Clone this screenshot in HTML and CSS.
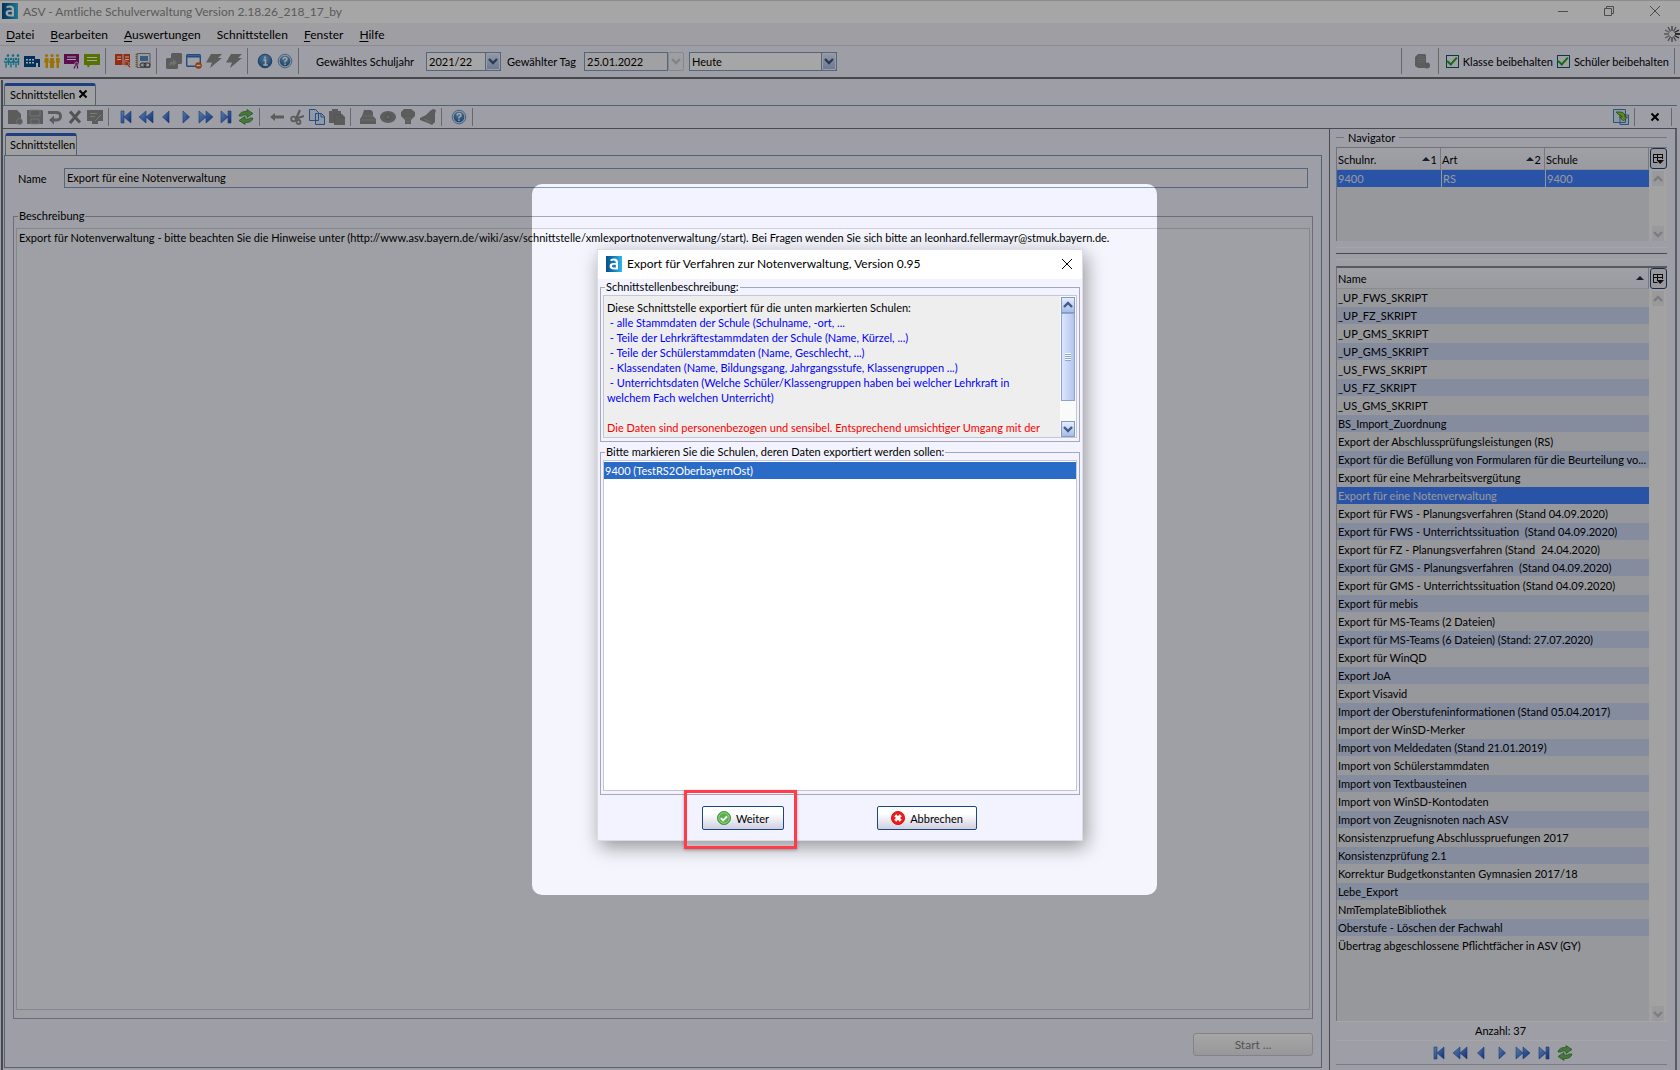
FILE: index.html
```html
<!DOCTYPE html>
<html lang="de">
<head>
<meta charset="utf-8">
<title>ASV - Amtliche Schulverwaltung</title>
<link rel="stylesheet" href="styles.css">
</head>
<body>
<svg class="defs" aria-hidden="true">
  <defs>
    <linearGradient id="blue" x1="0" y1="0" x2="1" y2="1"><stop offset="0" stop-color="#8fc4ff"/><stop offset="1" stop-color="#1848b8"/></linearGradient>
    <linearGradient id="logo" x1="0" y1="0" x2="1" y2="0"><stop offset="0" stop-color="#06508c"/><stop offset=".45" stop-color="#1478b4"/><stop offset="1" stop-color="#30b8e8"/></linearGradient>
    <radialGradient id="ball" cx=".5" cy=".3" r=".8"><stop offset="0" stop-color="#7db4e8"/><stop offset="1" stop-color="#1f5c9c"/></radialGradient>
  </defs>
  <symbol id="i-logo" viewBox="0 0 16 16"><path d="M0 0h16v16H0z" fill="url(#logo)"/><path d="M4.500 5V3.200Q6 2.400 8 2.400Q12 2.400 12 6V13.400H8Q3.600 13.400 3.600 10Q3.600 7 7.600 7H9.800V6Q9.800 4.400 7.800 4.400Q6 4.400 4.500 5Z" fill="#fff"/><path d="M9.800 8.800H8Q6 8.800 6 10.200T8 11.600H9.800Z" fill="#1478b4"/></symbol>
  <symbol id="i-group" viewBox="0 0 16 16"><g fill="#1ba8c8"><circle cx="4" cy="2.600" r="1.300"/><circle cx="9" cy="2.600" r="1.300"/><circle cx="14" cy="2.600" r="1.300"/><circle cx="2" cy="6" r="1.300"/><circle cx="7" cy="6" r="1.300"/><circle cx="12" cy="6" r="1.300"/></g><path d="M0 8l2 2 2-2M5 8l2 2 2-2M10 8l2 2 2-2M2 9v5.500M7 9v5.500M12 9v5.500M4.500 5v7M9.500 5v7M14.500 5v7" fill="none" stroke="#1ba8c8" stroke-width="1.400"/></symbol>
  <symbol id="i-school" viewBox="0 0 16 16"><path d="M0 3h11v3h5v8H0z" fill="#004a8c"/><path d="M2 6h2v1.500H2zM5 6h2v1.500H5zM8 6h2v1.500H8zM2 9h2v1.500H2zM5 9h2v1.500H5zM8 9h2v1.500H8zM12 10h2v4h-2z" fill="#fff"/></symbol>
  <symbol id="i-people" viewBox="0 0 16 16"><g fill="#f0b000"><circle cx="2.500" cy="2.600" r="1.600"/><circle cx="8" cy="2.600" r="1.600"/><circle cx="13.500" cy="2.600" r="1.600"/><path d="M1 5h3.500v4.500H4V15H1.500V9.500H0zM6.500 5h3L11 10h-1v5H6v-5H5zM12 5h3.500l.5 4.500h-1V15h-2.500V9.500H12z"/></g></symbol>
  <symbol id="i-board" viewBox="0 0 16 16"><path d="M0 1h15v10H0z" fill="#8c1478"/><path d="M3 4h9M3 6.500h9" stroke="#fff"/><circle cx="12.500" cy="11" r="2" fill="#a83c98" stroke="#f3f3ff" stroke-width=".6"/><path d="M11.500 12.500l-1.500 3M13.500 12.500v3" stroke="#8c1478" stroke-width="1.200"/></symbol>
  <symbol id="i-chat" viewBox="0 0 16 16"><path d="M0 1h16v11H6l-2 3-1-3H0z" fill="#84b000"/><path d="M3 4.500h10M3 7.500h10" stroke="#fff"/></symbol>
  <symbol id="i-book" viewBox="0 0 16 16"><path d="M0 1h7.500v11H0zM8.500 1H15v11H8.500z" fill="#e8431c"/><path d="M2 4h4M2 6.500h4M10 4h4M10 6.500h4" stroke="#fff"/><path d="M9.500 7.500l1 6 1.500-1.500 2.500 3 1.200-1.200-2.500-2.800 1.500-1z" fill="#e8431c" stroke="#f3f3ff" stroke-width=".6"/></symbol>
  <symbol id="i-report" viewBox="0 0 16 16"><path d="M2 .5h13v14H2z" fill="#e8edf5" stroke="#888"/><path d="M5 3h8v5H5z" fill="#5c8cc8"/><path d="M1.500 1v13" stroke="#a88848" stroke-width="2" stroke-dasharray="1 1"/><rect x="5" y="10" width="6" height="4" rx="2" fill="#ddd" stroke="#444"/><rect x="9" y="10" width="6" height="4" rx="2" fill="none" stroke="#444"/></symbol>
  <symbol id="i-copyg" viewBox="0 0 16 16"><path d="M6 0h9l1 1v9l-1 1h-3v4l-1 1H1l-1-1V6l1-1h4V1z" fill="#8e8e90"/><path d="M3 13l1-4h3V6l4 3.500L7 13v-2z" fill="#b0b0b2"/></symbol>
  <symbol id="i-window" viewBox="0 0 16 16"><rect x=".7" y="1.700" width="13.600" height="11.600" rx="1" fill="#f4f6fa" stroke="#3872c8" stroke-width="1.400"/><path d="M1 3.500h13" stroke="#3872c8" stroke-width="2"/><circle cx="12.500" cy="12.500" r="3.300" fill="#e06010"/><path d="M10.500 12.500h4" stroke="#fff" stroke-width="1.400"/></symbol>
  <symbol id="i-bolt" viewBox="0 0 16 16"><path d="M5 1h11l-4 4h4L4 15l2-5.500H0z" fill="#8e8e90"/></symbol>
  <symbol id="i-info" viewBox="0 0 16 16"><circle cx="8" cy="8" r="6.800" fill="url(#ball)" stroke="#28649c"/><path d="M6.500 7H8.500v5M6.300 12h4.400M8 3.500v2" stroke="#fff" stroke-width="1.600" fill="none"/></symbol>
  <symbol id="i-help" viewBox="0 0 16 16"><circle cx="8" cy="8" r="6.800" fill="#d8e8f8" stroke="#6c9ccc"/><circle cx="8" cy="8" r="5.300" fill="url(#ball)"/><path d="M6 6.500Q6 4.500 8 4.500T10 6.300Q10 7.400 8 8.200V9.500M8 10.500v1.500" stroke="#fff" stroke-width="1.400" fill="none"/></symbol>
  <symbol id="i-db" viewBox="0 0 16 16"><path d="M4 1h7l1 1v8.500a3 3 0 0 0-1 4.500H4l-3-2V4z" fill="#8e8e90"/><circle cx="13" cy="12.500" r="3" fill="#8a8a8c"/><path d="M4 4h7M4 6.500h7M4 9h7" stroke="#a8a8aa" stroke-width=".7"/></symbol>
  <symbol id="i-new" viewBox="0 0 16 16"><path d="M1 1h9l4 4v8h-1v2H1z" fill="#8e8e90"/><circle cx="12.500" cy="12.500" r="3" fill="#8e8e90" stroke="#b8b8bc" stroke-width=".8"/></symbol>
  <symbol id="i-save" viewBox="0 0 16 16"><path d="M0 1h15l1 1v13H0z" fill="#8e8e90"/><path d="M3 1h10v6H3zM4 10h8v5H4z" fill="#8e8e90" stroke="#bcbcc0" stroke-width=".8"/></symbol>
  <symbol id="i-undo" viewBox="0 0 16 16"><path d="M1 3.500h8q4.500 0 4.500 3.800t-4.500 3.700H6" fill="none" stroke="#8e8e90" stroke-width="3"/><path d="M7 6.500v9L2 11z" fill="#8e8e90"/></symbol>
  <symbol id="i-del" viewBox="0 0 16 16"><path d="M3 2.500l10 11M13 2L3 14" stroke="#808082" stroke-width="3"/></symbol>
  <symbol id="i-edit" viewBox="0 0 16 16"><path d="M0 1h16v11h-5v3H5v-3H0z" fill="#8e8e90"/><path d="M3 4.500h7M3 7.500h5M8 12l6-6" stroke="#bcbcc0"/></symbol>
  <symbol id="i-first" viewBox="0 0 16 16"><path d="M3 2h3v12H3zM13 2v12L6 8z" fill="url(#blue)" stroke="#2458b8" stroke-width=".6"/></symbol>
  <symbol id="i-rew" viewBox="0 0 16 16"><path d="M8 2v12L1 8zM15 2v12L8 8z" fill="url(#blue)" stroke="#2458b8" stroke-width=".6"/></symbol>
  <symbol id="i-prev" viewBox="0 0 16 16"><path d="M11 2v12L4.500 8z" fill="url(#blue)" stroke="#2458b8" stroke-width=".6"/></symbol>
  <symbol id="i-next" viewBox="0 0 16 16"><path d="M5 2v12l6.500-6z" fill="url(#blue)" stroke="#2458b8" stroke-width=".6"/></symbol>
  <symbol id="i-fwd" viewBox="0 0 16 16"><path d="M1 2v12l7-6zM8 2v12l7-6z" fill="url(#blue)" stroke="#2458b8" stroke-width=".6"/></symbol>
  <symbol id="i-last" viewBox="0 0 16 16"><path d="M10 2h3v12h-3zM3 2v12l7-6z" fill="url(#blue)" stroke="#2458b8" stroke-width=".6"/></symbol>
  <symbol id="i-refresh" viewBox="0 0 16 16"><path d="M1 7q1-5 8-4.500V.5l6 4-6 4V6Q5 5.500 4 7zM15 9q-1 5-8 4.500v2l-6-4 6-4V10q4 .5 5-1z" fill="#6cb858" stroke="#2f8030" stroke-width=".7"/></symbol>
  <symbol id="i-back" viewBox="0 0 16 16"><path d="M1 8l5-4v2.500h9v3H6V12z" fill="#8e8e90"/></symbol>
  <symbol id="i-cut" viewBox="0 0 16 16"><path d="M11 1L7 10M15 7l-9 3" stroke="#8e8e90" stroke-width="2.200"/><circle cx="4.500" cy="10" r="2.300" fill="none" stroke="#8e8e90" stroke-width="1.800"/><circle cx="9.500" cy="13" r="2" fill="none" stroke="#8e8e90" stroke-width="1.800"/></symbol>
  <symbol id="i-copy" viewBox="0 0 16 16"><path d="M.5 .5h6l3 3v8h-9zM6.500 4.500h6l3 3v8h-9z" fill="#dcebff" stroke="#3c78c8"/><path d="M12 4.500V8h3.500" fill="none" stroke="#3c78c8"/></symbol>
  <symbol id="i-paste" viewBox="0 0 16 16"><path d="M0 2h3V0h6v2h3v3h1l3 3v8H5v-2H0z" fill="#8e8e90"/><path d="M5.500 14V5.500H12M12 5.500V9h4" fill="none" stroke="#7c7c7e" stroke-width=".7"/></symbol>
  <symbol id="i-print" viewBox="0 0 16 16"><path d="M4 1h7l2 2v4l3 3v5H0v-5l2-3z" fill="#8e8e90"/><path d="M3 7h10M1 11h14" stroke="#aaaaac" stroke-width=".8"/></symbol>
  <symbol id="i-eye" viewBox="0 0 16 16"><ellipse cx="8" cy="8" rx="8" ry="6" fill="#8e8e90"/><circle cx="8" cy="8" r="2.500" fill="#9c9c9e" stroke="#7a7a7c"/></symbol>
  <symbol id="i-bulb" viewBox="0 0 16 16"><path d="M4 0h7l4 3v4l-4 4v4H5v-4L1 7V3z" fill="#8e8e90"/><path d="M5 9.500h6M5 12.500h6" stroke="#a6a6a8" stroke-width=".8"/></symbol>
  <symbol id="i-bell" viewBox="0 0 16 16"><path d="M13 0l3 1-1 4v8l-3 3-4-2-8-3V9l6-3 4-4z" fill="#8e8e90"/><path d="M4 10l7 3" stroke="#a6a6a8"/></symbol>
  <symbol id="i-export" viewBox="0 0 16 16"><path d="M.5 .5h12v13H.5zM7 6h8.500v9.500H7z" fill="#dcebff" stroke="#4080b8"/><path d="M3 3h4q5 0 5 5h2.500l-4 4-4-4H9q0-2-3-2z" fill="#98d018" stroke="#2c7838" stroke-width=".8"/></symbol>
  <symbol id="i-x" viewBox="0 0 16 16"><path d="M4.500 4.500l7 7M11.500 4.500l-7 7" stroke="currentColor" stroke-width="2"/></symbol>
  <symbol id="i-close" viewBox="0 0 16 16"><path d="M3 3l10 10M13 3L3 13" stroke="currentColor"/></symbol>
  <symbol id="i-min" viewBox="0 0 16 16"><path d="M3 8.500h10" stroke="currentColor"/></symbol>
  <symbol id="i-max" viewBox="0 0 16 16"><path d="M3.500 5.500h7v7h-7zM5.500 5V3.500h7v7H11" fill="none" stroke="currentColor"/></symbol>
  <symbol id="i-down" viewBox="0 0 10 8"><path d="M1 2l4 4 4-4" fill="none" stroke="currentColor" stroke-width="2.400"/></symbol>
  <symbol id="i-up" viewBox="0 0 10 8"><path d="M1 6l4-4 4 4" fill="none" stroke="currentColor" stroke-width="2.400"/></symbol>
  <symbol id="i-cols" viewBox="0 0 12 12"><path d="M1 1.500h10M1 4.500h10M1.500 1v8.500h4M5.500 1v7M10.500 1v5" fill="none" stroke="#111"/><path d="M4.500 7H12L8.200 11z" fill="#111"/></symbol>
  <symbol id="i-sort" viewBox="0 0 8 4"><path d="M0 4l4-4 4 4z" fill="#1c3048"/></symbol>
  <symbol id="i-ok" viewBox="0 0 16 16"><circle cx="8" cy="8" r="7.500" fill="#58b04c" stroke="#3c9038"/><circle cx="8" cy="8" r="6" fill="none" stroke="#a8dca0" stroke-width=".8"/><path d="M4.500 8.200l2.500 2.500 4.500-4.700" fill="none" stroke="#fff" stroke-width="2.200"/></symbol>
  <symbol id="i-no" viewBox="0 0 16 16"><circle cx="8" cy="8" r="7.500" fill="#f41818" stroke="#d80c0c"/><path d="M4.800 4.800l6.400 6.400M11.200 4.800l-6.400 6.400" stroke="#fff" stroke-width="3.200"/></symbol>
  <symbol id="i-spin" viewBox="0 0 16 16"><g stroke-width="1.400"><path d="M11 8h5" stroke="#000"/><path d="M10.500 6.500L15 4M10.500 9.500L15 12" stroke="#333"/><path d="M9.500 5.500L12 1M9.500 10.500L12 15" stroke="#777"/><path d="M8 5V0M8 11v5" stroke="#666"/><path d="M6.500 5.500L4 1M6.500 10.500L4 15" stroke="#777"/><path d="M5.500 6.500L1 4M5.500 9.500L1 12M5 8H0" stroke="#888"/></g></symbol>
</svg>

<div class="app">
  <header class="titlebar">
    <svg class="logo"><use href="#i-logo"/></svg>
    <h1>ASV - Amtliche Schulverwaltung Version 2.18.26_218_17_by</h1>
    <div class="winbtns">
      <button aria-label="Minimieren"><svg class="ic"><use href="#i-min"/></svg></button>
      <button aria-label="Maximieren"><svg class="ic"><use href="#i-max"/></svg></button>
      <button aria-label="Schließen"><svg class="ic"><use href="#i-close"/></svg></button>
    </div>
  </header>

  <nav class="menu">
    <button><u>D</u>atei</button><button><u>B</u>earbeiten</button><button><u>A</u>uswertungen</button><button>Schnittstellen</button><button><u>F</u>enster</button><button><u>H</u>ilfe</button>
    <svg class="ic spin"><use href="#i-spin"/></svg>
  </nav>

  <div class="toolbar main">
    <button class="tb" aria-label="Klassen"><svg class="ic"><use href="#i-group"/></svg></button>
    <button class="tb" aria-label="Schule"><svg class="ic"><use href="#i-school"/></svg></button>
    <button class="tb" aria-label="Schüler"><svg class="ic"><use href="#i-people"/></svg></button>
    <button class="tb" aria-label="Lehrer"><svg class="ic"><use href="#i-board"/></svg></button>
    <button class="tb" aria-label="Unterricht"><svg class="ic"><use href="#i-chat"/></svg></button>
    <i class="sep"></i>
    <button class="tb" aria-label="Noten"><svg class="ic"><use href="#i-book"/></svg></button>
    <button class="tb" aria-label="Berichte"><svg class="ic"><use href="#i-report"/></svg></button>
    <i class="sep"></i>
    <button class="tb" aria-label="Übernehmen"><svg class="ic"><use href="#i-copyg"/></svg></button>
    <button class="tb" aria-label="Fenster schließen"><svg class="ic"><use href="#i-window"/></svg></button>
    <button class="tb" aria-label="Verbinden"><svg class="ic"><use href="#i-bolt"/></svg></button>
    <button class="tb" aria-label="Trennen"><svg class="ic"><use href="#i-bolt"/></svg></button>
    <i class="sep"></i>
    <button class="tb" aria-label="Info"><svg class="ic"><use href="#i-info"/></svg></button>
    <button class="tb" aria-label="Hilfe"><svg class="ic"><use href="#i-help"/></svg></button>
    <i class="sep"></i>
    <label class="year-label" for="year">Gewähltes Schuljahr</label>
    <span class="combo year"><select id="year"><option>2021/22</option></select><span class="arrow"><svg><use href="#i-down"/></svg></span></span>
    <label class="day-label" for="day">Gewählter Tag</label>
    <span class="combo day"><input id="day" value="25.01.2022"><span class="arrow off"><svg><use href="#i-down"/></svg></span></span>
    <span class="combo today"><select aria-label="Tag"><option>Heute</option></select><span class="arrow"><svg><use href="#i-down"/></svg></span></span>
    <span class="grow"></span>
    <i class="sep"></i>
    <button class="tb wide" aria-label="Daten"><svg class="ic"><use href="#i-db"/></svg></button>
    <i class="sep"></i>
    <label class="check"><input type="checkbox" checked>Klasse beibehalten</label>
    <label class="check"><input type="checkbox" checked>Schüler beibehalten</label>
    <i class="sep end"></i>
  </div>

  <div class="doc">
    <div class="tabs"><span class="tab">Schnittstellen<button aria-label="Tab schließen"><svg class="ic"><use href="#i-x"/></svg></button></span></div>
    <div class="toolbar sub">
      <button class="tb" aria-label="Neu"><svg class="ic"><use href="#i-new"/></svg></button>
      <button class="tb" aria-label="Speichern"><svg class="ic"><use href="#i-save"/></svg></button>
      <button class="tb" aria-label="Rückgängig"><svg class="ic"><use href="#i-undo"/></svg></button>
      <button class="tb" aria-label="Löschen"><svg class="ic"><use href="#i-del"/></svg></button>
      <button class="tb" aria-label="Bearbeiten"><svg class="ic"><use href="#i-edit"/></svg></button>
      <i class="sep"></i>
      <button class="tb" aria-label="Erster"><svg class="ic"><use href="#i-first"/></svg></button>
      <button class="tb" aria-label="Zurückspulen"><svg class="ic"><use href="#i-rew"/></svg></button>
      <button class="tb" aria-label="Voriger"><svg class="ic"><use href="#i-prev"/></svg></button>
      <button class="tb" aria-label="Nächster"><svg class="ic"><use href="#i-next"/></svg></button>
      <button class="tb" aria-label="Vorspulen"><svg class="ic"><use href="#i-fwd"/></svg></button>
      <button class="tb" aria-label="Letzter"><svg class="ic"><use href="#i-last"/></svg></button>
      <button class="tb" aria-label="Aktualisieren"><svg class="ic"><use href="#i-refresh"/></svg></button>
      <i class="sep"></i>
      <button class="tb" aria-label="Zurück"><svg class="ic"><use href="#i-back"/></svg></button>
      <button class="tb" aria-label="Ausschneiden"><svg class="ic"><use href="#i-cut"/></svg></button>
      <button class="tb" aria-label="Kopieren"><svg class="ic"><use href="#i-copy"/></svg></button>
      <button class="tb" aria-label="Einfügen"><svg class="ic"><use href="#i-paste"/></svg></button>
      <i class="sep"></i>
      <button class="tb" aria-label="Drucken"><svg class="ic"><use href="#i-print"/></svg></button>
      <button class="tb" aria-label="Vorschau"><svg class="ic"><use href="#i-eye"/></svg></button>
      <button class="tb" aria-label="Hinweis"><svg class="ic"><use href="#i-bulb"/></svg></button>
      <button class="tb" aria-label="Erinnerung"><svg class="ic"><use href="#i-bell"/></svg></button>
      <i class="sep"></i>
      <button class="tb" aria-label="Hilfe zum Modul"><svg class="ic"><use href="#i-help"/></svg></button>
      <i class="sep"></i>
      <span class="grow"></span>
      <button class="tb" aria-label="Export"><svg class="ic"><use href="#i-export"/></svg></button>
      <i class="sep"></i>
      <button class="tb wide" aria-label="Modul schließen"><svg class="ic"><use href="#i-x"/></svg></button>
      <i class="sep end"></i>
    </div>

    <div class="split">
      <main class="editor">
        <div class="tabs inner"><span class="tab">Schnittstellen</span></div>
        <div class="form">
          <div class="field"><label for="name">Name</label><input id="name" value="Export für eine Notenverwaltung"></div>
          <fieldset class="group desc">
            <legend>Beschreibung</legend>
            <div class="desc-text">Export für Notenverwaltung - bitte beachten Sie die Hinweise unter (http://www.asv.bayern.de/wiki/asv/schnittstelle/xmlexportnotenverwaltung/start). Bei Fragen wenden Sie sich bitte an leonhard.fellermayr@stmuk.bayern.de.</div>
          </fieldset>
          <button class="start" disabled>Start ...</button>
        </div>
      </main>

      <aside class="navigator">
        <h2>Navigator</h2>
        <div class="grid schools">
          <div class="grid-body">
            <table>
              <thead><tr><th><span>Schulnr.</span><svg class="sort"><use href="#i-sort"/></svg>1</th><th><span>Art</span><svg class="sort"><use href="#i-sort"/></svg>2</th><th><span>Schule</span></th></tr></thead>
              <tbody><tr class="sel"><td>9400</td><td>RS</td><td>9400</td></tr></tbody>
            </table>
          </div>
          <div class="gutter"><button class="cols" aria-label="Spalten"><svg><use href="#i-cols"/></svg></button><span class="sb off"><svg><use href="#i-up"/></svg></span><span class="grow"></span><span class="sb off"><svg><use href="#i-down"/></svg></span></div>
        </div>
        <hr class="divider">
        <div class="grid names">
          <div class="grid-body">
            <table>
              <thead><tr><th><span>Name</span><svg class="sort"><use href="#i-sort"/></svg></th></tr></thead>
              <tbody>
                <tr><td>_UP_FWS_SKRIPT</td></tr>
                <tr><td>_UP_FZ_SKRIPT</td></tr>
                <tr><td>_UP_GMS_SKRIPT</td></tr>
                <tr><td>_UP_GMS_SKRIPT</td></tr>
                <tr><td>_US_FWS_SKRIPT</td></tr>
                <tr><td>_US_FZ_SKRIPT</td></tr>
                <tr><td>_US_GMS_SKRIPT</td></tr>
                <tr><td>BS_Import_Zuordnung</td></tr>
                <tr><td>Export der Abschlussprüfungsleistungen (RS)</td></tr>
                <tr><td>Export für die Befüllung von Formularen für die Beurteilung vo...</td></tr>
                <tr><td>Export für eine Mehrarbeitsvergütung</td></tr>
                <tr class="sel"><td>Export für eine Notenverwaltung</td></tr>
                <tr><td>Export für FWS - Planungsverfahren (Stand 04.09.2020)</td></tr>
                <tr><td>Export für FWS - Unterrichtssituation&nbsp; (Stand 04.09.2020)</td></tr>
                <tr><td>Export für FZ - Planungsverfahren (Stand&nbsp; 24.04.2020)</td></tr>
                <tr><td>Export für GMS - Planungsverfahren&nbsp; (Stand 04.09.2020)</td></tr>
                <tr><td>Export für GMS - Unterrichtssituation (Stand 04.09.2020)</td></tr>
                <tr><td>Export für mebis</td></tr>
                <tr><td>Export für MS-Teams (2 Dateien)</td></tr>
                <tr><td>Export für MS-Teams (6 Dateien) (Stand: 27.07.2020)</td></tr>
                <tr><td>Export für WinQD</td></tr>
                <tr><td>Export JoA</td></tr>
                <tr><td>Export Visavid</td></tr>
                <tr><td>Import der Oberstufeninformationen (Stand 05.04.2017)</td></tr>
                <tr><td>Import der WinSD-Merker</td></tr>
                <tr><td>Import von Meldedaten (Stand 21.01.2019)</td></tr>
                <tr><td>Import von Schülerstammdaten</td></tr>
                <tr><td>Import von Textbausteinen</td></tr>
                <tr><td>Import von WinSD-Kontodaten</td></tr>
                <tr><td>Import von Zeugnisnoten nach ASV</td></tr>
                <tr><td>Konsistenzpruefung Abschlusspruefungen 2017</td></tr>
                <tr><td>Konsistenzprüfung 2.1</td></tr>
                <tr><td>Korrektur Budgetkonstanten Gymnasien 2017/18</td></tr>
                <tr><td>Lebe_Export</td></tr>
                <tr><td>NmTemplateBibliothek</td></tr>
                <tr><td>Oberstufe - Löschen der Fachwahl</td></tr>
                <tr><td>Übertrag abgeschlossene Pflichtfächer in ASV (GY)</td></tr>
              </tbody>
            </table>
          </div>
          <div class="gutter"><button class="cols" aria-label="Spalten der Liste"><svg><use href="#i-cols"/></svg></button><span class="sb off"><svg><use href="#i-up"/></svg></span><span class="grow"></span><span class="sb off"><svg><use href="#i-down"/></svg></span></div>
        </div>
        <p class="count">Anzahl: 37</p>
        <div class="pager">
          <button class="tb" aria-label="Liste: Anfang"><svg class="ic"><use href="#i-first"/></svg></button>
          <button class="tb" aria-label="Liste: schnell zurück"><svg class="ic"><use href="#i-rew"/></svg></button>
          <button class="tb" aria-label="Liste: zurück"><svg class="ic"><use href="#i-prev"/></svg></button>
          <button class="tb" aria-label="Liste: vor"><svg class="ic"><use href="#i-next"/></svg></button>
          <button class="tb" aria-label="Liste: schnell vor"><svg class="ic"><use href="#i-fwd"/></svg></button>
          <button class="tb" aria-label="Liste: Ende"><svg class="ic"><use href="#i-last"/></svg></button>
          <button class="tb" aria-label="Liste: aktualisieren"><svg class="ic"><use href="#i-refresh"/></svg></button>
        </div>
      </aside>
    </div>
  </div>
</div>

<div class="spotlight"></div>

<div class="dialog" role="dialog" aria-labelledby="dlg-title">
  <div class="dlg-head">
    <svg class="logo"><use href="#i-logo"/></svg>
    <h2 id="dlg-title">Export für Verfahren zur Notenverwaltung, Version 0.95</h2>
    <button aria-label="Dialog schließen"><svg class="ic"><use href="#i-close"/></svg></button>
  </div>
  <fieldset class="group info">
    <legend>Schnittstellenbeschreibung:</legend>
    <div class="scroll">
      <div class="info-text">
        <p>Diese Schnittstelle exportiert für die unten markierten Schulen:</p>
        <p class="blue">&nbsp;- alle Stammdaten der Schule (Schulname, -ort, ...</p>
        <p class="blue">&nbsp;- Teile der Lehrkräftestammdaten der Schule (Name, Kürzel, ...)</p>
        <p class="blue">&nbsp;- Teile der Schülerstammdaten (Name, Geschlecht, ...)</p>
        <p class="blue">&nbsp;- Klassendaten (Name, Bildungsgang, Jahrgangsstufe, Klassengruppen ...)</p>
        <p class="blue">&nbsp;- Unterrichtsdaten (Welche Schüler/Klassengruppen haben bei welcher Lehrkraft in<br>welchem Fach welchen Unterricht)</p>
        <p class="red">Die Daten sind personenbezogen und sensibel. Entsprechend umsichtiger Umgang mit der</p>
      </div>
      <div class="scrollbar"><span class="sb"><svg><use href="#i-up"/></svg></span><span class="thumb"></span><span class="grow"></span><span class="sb"><svg><use href="#i-down"/></svg></span></div>
    </div>
  </fieldset>
  <fieldset class="group choose">
    <legend>Bitte markieren Sie die Schulen, deren Daten exportiert werden sollen:</legend>
    <ul><li>9400 (TestRS2OberbayernOst)</li></ul>
  </fieldset>
  <div class="actions">
    <span class="mark-anchor"><button class="push"><svg><use href="#i-ok"/></svg>Weiter</button><span class="mark"></span></span>
    <button class="push cancel"><svg><use href="#i-no"/></svg>Abbrechen</button>
  </div>
</div>
</body>
</html>
```

FILE: styles.css
```css
* { box-sizing: border-box; }
body {
  margin: 0;
  height: 100vh;
  position: relative;
  overflow: hidden;
  font: 11px/15px Lato, "Open Sans", sans-serif;
  color: #000;
  background: #f3f3ff;
}
button, input, select { font: inherit; color: inherit; margin: 0; }
button { padding: 0; border: 0; background: none; }
svg { display: block; flex: none; }
h1, h2, p, ul { margin: 0; padding: 0; font-weight: 400; }
.defs { position: absolute; width: 0; height: 0; }
.ic, .logo { width: 16px; height: 16px; }
.grow { flex: 1; }

.app { height: 100%; display: flex; flex-direction: column; }

.titlebar {
  height: 23px; flex: none; display: flex; align-items: center; gap: 5px;
  padding: 0 0 2px 2px; background: #fff; border-top: 1px solid #d8d8d8;
}
.titlebar h1 { flex: 1; font-size: 12px; color: #8c8c8c; }
.winbtns { display: flex; gap: 30px; padding-right: 17px; color: #777; }

.menu {
  height: 23px; flex: none; display: flex; align-items: center; gap: 16px;
  padding: 0 0 0 6px; background: #f5f5fb; border-bottom: 1px solid #d8d8e0; font-size: 12px;
}
.menu u { text-underline-offset: 2px; }
.spin { margin-left: auto; }

.toolbar { display: flex; align-items: center; flex: none; }
.toolbar.main { height: 33px; padding: 0 0 1px 2px; border-bottom: 2px solid #6c6c74; }
.tb { width: 20px; height: 20px; display: flex; align-items: center; justify-content: center; flex: none; }
.tb.wide { width: 26px; }
.sep { width: 1px; height: 26px; margin: 0 7px 0 3px; background: #a0a0a8; flex: none; }
.sep.end { margin-right: 5px; }
.year-label { width: 101px; margin: 0 9px 0 10px; }
.day-label { width: 74px; margin: 0 3px 0 6px; }

.combo { position: relative; display: flex; height: 19px; flex: none; }
.combo select, .combo input {
  appearance: none; width: 100%; height: 19px; padding: 0 2px; border: 1px solid #7f9dc0;
  border-radius: 0; background: #fff; outline: 0;
}
.combo input { background: #f8f8fc; }
.combo.year { width: 75px; }
.combo.day { width: 100px; margin-right: 5px; }
.combo.day input { width: 84px; }
.combo.today { width: 148px; }
.arrow {
  position: absolute; right: 0; top: 0; width: 16px; height: 19px; display: flex; align-items: center; justify-content: center;
  border: 1px solid #7f9dc0; border-radius: 2px; background: linear-gradient(#e4ecff, #a4b8e4); color: #405a88;
  box-shadow: inset 0 0 0 1px #f0f4ff;
}
.arrow svg, .sb svg { width: 10px; height: 8px; }
.arrow.off { border-color: #d0d0da; background: #f3f3fb; color: #c8c8d0; }

.check { display: flex; align-items: center; gap: 4px; margin-right: 4px; }
.check:last-of-type { margin-right: 2px; }
.check input {
  appearance: none; width: 13px; height: 13px; border: 1px solid #1c5080; background: #f6f6f8;
  display: flex; align-items: center; justify-content: center;
}
.check input::after { content: ""; width: 4px; height: 8px; margin-bottom: 2px; border: solid #21a121; border-width: 0 2px 2px 0; transform: rotate(42deg); }

.doc {
  flex: 1; min-height: 0; display: flex; flex-direction: column;
  margin: 1px 3px 0 1px; border-left: 2px solid #6c7078;
}
.tabs { height: 26px; flex: none; display: flex; align-items: flex-end; padding-left: 1px; border-bottom: 1px solid #8098a8; }
.tab {
  display: flex; align-items: center; height: 22px; padding: 0 4px 3px 5px; background: #f7f7fb;
  border: 1px solid #8098a8; border-top: 3px solid #3060c8; border-bottom: 0; border-radius: 3px 3px 0 0;
}
.toolbar.sub { height: 23px; padding-left: 2px; border-bottom: 1px solid #707078; }
.toolbar.sub .sep { height: 18px; }

.split { flex: 1; min-height: 0; display: flex; gap: 5px; }
.editor { flex: 1; min-width: 0; display: flex; flex-direction: column; margin: 0 2px 2px 1px; }
.tabs.inner { height: 27px; }
.tabs.inner .tab { padding: 0 1px 2px 4px; }
.form { flex: 1; min-height: 0; display: flex; flex-direction: column; padding: 12px 8px 11px 8px; border: 1px solid #8098b0; border-top: 0; }
.field { display: flex; align-items: center; margin: 0 5px 20px 5px; }
.field label { width: 46px; }
.field input { flex: 1; height: 20px; padding: 0 2px 2px; border: 1px solid #7f9dc8; border-radius: 0; background: #f5f5fb; outline: 0; }

.group { margin: 0; padding: 0 2px 2px; border: 1px solid #a8a8b4; min-width: 0; display: flex; flex-direction: column; }
.group legend { padding: 0 1px; margin-left: 2px; line-height: 16px; }
.desc { flex: 1; min-height: 0; padding-bottom: 8px; }
.desc-text { flex: 1; margin-top: 4px; padding: 1px 2px; border: 1px solid #d0d0d4; background: #f5f6fd; white-space: nowrap; }
.start {
  align-self: flex-end; width: 120px; height: 23px; margin-top: 14px; border: 1px solid #c8c8d0; border-radius: 3px;
  background: linear-gradient(#fff, #eaeaee); color: #808080; font-size: 12px;
}

.navigator { width: 348px; flex: none; display: flex; flex-direction: column; padding: 0 8px 5px 6px; border-left: 1px solid #707078; border-right: 2px solid #8890a0; }
.navigator h2 { display: flex; align-items: center; gap: 4px; height: 18px; padding-bottom: 2px; font-size: 11px; }
.navigator h2::before, .navigator h2::after { content: ""; height: 1px; background: #b4b4bc; width: 8px; }
.navigator h2::after { flex: 1; }
.grid { display: flex; border: 1px solid #b0b0b8; border-width: 1px 0 0 1px; }
.schools { height: 94px; flex: none; }
.names { flex: 1; min-height: 0; }
.grid-body { flex: 1; min-width: 0; background: #e8eaf0; overflow: hidden; }
.grid table { width: 100%; table-layout: fixed; border-spacing: 0; border-collapse: separate; }
.grid th {
  height: 22px; padding: 1px 3px 0 1px; background: linear-gradient(#f5f5ff, #eeeef8); border-right: 1px solid #b8b8c0; border-bottom: 1px solid #d8d8dc;
  text-align: right; font-weight: 400; white-space: nowrap;
}
.names th { height: 21px; padding-top: 0; }
.grid th span { float: left; }
.sort { display: inline-block; width: 8px; height: 4px; margin: 0 1px 3px; }
.grid td { height: 18px; padding: 0 1px; border-bottom: 1px solid #e8eaf0; white-space: nowrap; overflow: hidden; line-height: 17px; }
.names tr:nth-child(even) td { background: #cdd7f3; }
.grid tr.sel td { background: #4080ff; color: #e8eaf0; }
.schools tr.sel td + td { border-left: 1px solid #e8eaf0; }
.gutter { width: 18px; display: flex; flex-direction: column; align-items: center; background: #f9f9fb; }
.cols { width: 17px; height: 21px; border: 1px solid #1c4878; border-radius: 3px; background: #ebebf2; display: flex; align-items: center; justify-content: center; margin-bottom: 2px; }
.cols svg { width: 12px; height: 12px; }
.sb { display: flex; align-items: center; justify-content: center; width: 14px; height: 16px; border: 1px solid #7f9dc0; background: linear-gradient(#e4ecff, #a8bce8); color: #405a88; }
.sb.off { width: 12px; height: 15px; border: 0; background: #ededf0; color: #c0c0c4; }
.divider { width: 100%; height: 13px; margin: 6px 0; flex: none; border: solid #fff; border-width: 1px 0; background: linear-gradient(#707078, #707078) 0 5px / 100% 1px no-repeat; }
.names { border-top: 2px solid #888890; }
.count { height: 20px; line-height: 18px; text-align: center; border-bottom: 1px solid #fff; border-top: 1px solid #fff; padding-right: 2px; }
.pager { height: 24px; display: flex; justify-content: center; align-items: center; gap: 1px; border-bottom: 1px solid #b8bccc; }

.spotlight {
  position: absolute; left: calc(50% - 308px); top: 184px; width: 625px; height: 711px; border-radius: 10px;
  box-shadow: 0 0 0 4000px rgba(0, 0, 0, .35); pointer-events: none;
}

.dialog {
  position: absolute; left: calc(50% - 243px); top: 249px; width: 486px; padding: 0 2px 10px; display: flex; flex-direction: column;
  background: #f3f3ff; border: 1px solid #dcdce4; box-shadow: 3px 6px 18px rgba(0, 0, 0, .4);
}
.dlg-head { display: flex; align-items: center; gap: 5px; height: 29px; margin: 0 -2px; padding: 0 7px 2px 8px; background: #fff; }
.dlg-head h2 { flex: 1; font-size: 12px; }
.info { height: 163px; }
.scroll { height: 143px; display: flex; border: 1px solid #c4c8d4; background: #eee; }
.info-text { flex: 1; min-width: 0; padding: 4px 3px 0; white-space: nowrap; }
.blue { color: #00f; }
.red { color: #f00; margin-top: 15px; }
.scrollbar { width: 16px; display: flex; flex-direction: column; align-items: center; padding-top: 1px; background: #fafafa; }
.thumb { width: 14px; height: 88px; border: 1px solid #8ca4d0; background: linear-gradient(90deg, #dce6ff, #b4c4ec); display: flex; align-items: center; justify-content: center; }
.thumb::after { content: ""; width: 6px; height: 8px; background: repeating-linear-gradient(#f4f8ff 0 1px, #8ca4d0 1px 2px); }
.choose { height: 351px; margin-top: 2px; }
.choose ul { height: 331px; padding-top: 1px; list-style: none; background: #fff; border: 1px solid #c4c8d4; }
.choose li { height: 17px; padding-left: 1px; line-height: 17px; background: #2b6bc8; color: #fff; }
.actions { display: flex; margin-top: 11px; padding-left: 102px; gap: 93px; }
.push { display: flex; align-items: center; justify-content: center; gap: 5px; width: 82px; height: 24px; border: 1px solid #1c4880; border-radius: 2px; background: linear-gradient(#fff 30%, #d0d0e0); }
.push svg { width: 14px; height: 14px; }
.cancel { width: 100px; }
.mark-anchor { position: relative; }
.mark { position: absolute; inset: -16px -13px -19px -18px; border: 3px solid #ff3c48; pointer-events: none; box-shadow: 0 1px 3px rgba(0, 0, 0, .3); }
```
